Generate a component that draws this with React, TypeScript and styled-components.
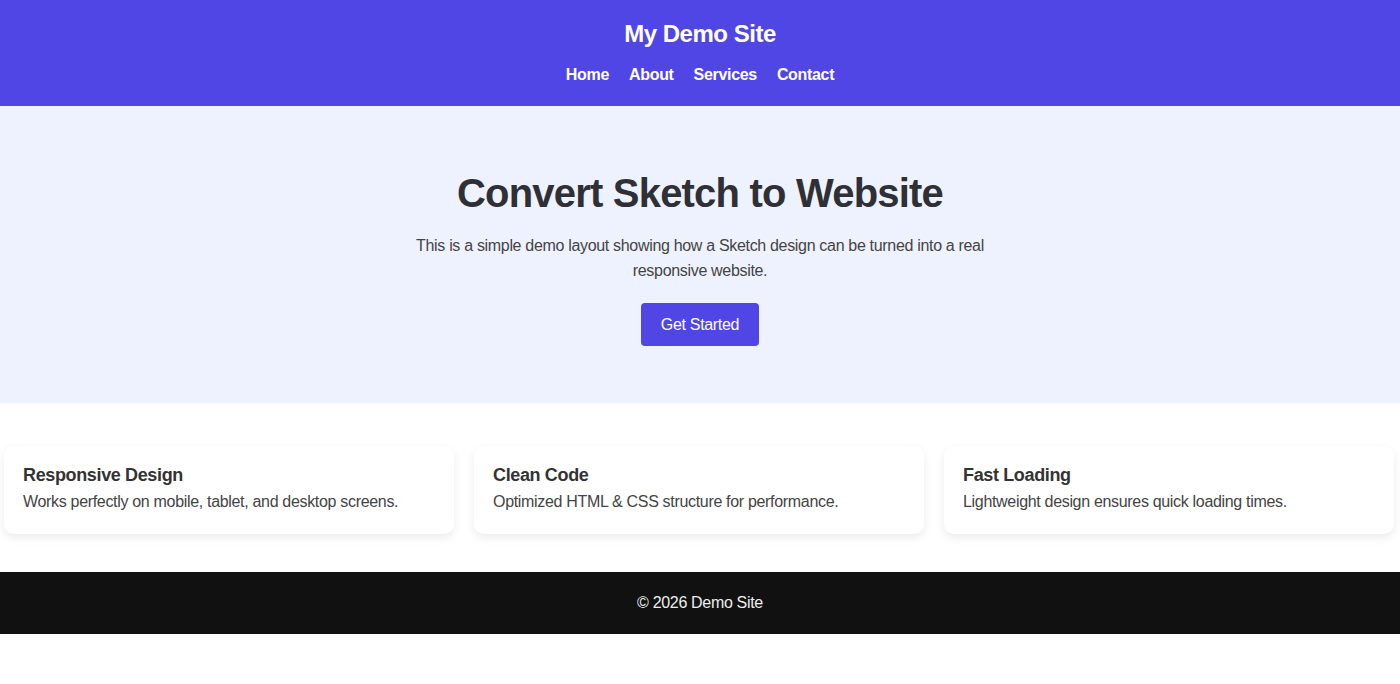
import * as React from 'react';
import styled, { createGlobalStyle } from 'styled-components';

const GlobalStyle = createGlobalStyle`
body {
    margin: 0;
    font-family: "Liberation Sans", Arial, sans-serif;
    background: #fff;
    color: #333;
}

* {
    letter-spacing: -0.02em;
}
`

const features = [
    { title: 'Responsive Design', text: 'Works perfectly on mobile, tablet, and desktop screens.' },
    { title: 'Clean Code', text: 'Optimized HTML & CSS structure for performance.' },
    { title: 'Fast Loading', text: 'Lightweight design ensures quick loading times.' },
];

const App = () => {
    return <>
        <GlobalStyle />
        <StyledHeader>
            <StyledLogo>My Demo Site</StyledLogo>
            <StyledNav>
                <StyledNavLink href="#">Home</StyledNavLink>
                <StyledNavLink href="#">About</StyledNavLink>
                <StyledNavLink href="#">Services</StyledNavLink>
                <StyledNavLink href="#">Contact</StyledNavLink>
            </StyledNav>
        </StyledHeader>

        <StyledHero>
            <StyledHeroTitle>Convert Sketch to Website</StyledHeroTitle>
            <StyledHeroText>This is a simple demo layout showing how a Sketch design can be turned into a real responsive website.</StyledHeroText>
            <StyledButton>Get Started</StyledButton>
        </StyledHero>

        <StyledFeatures>
            {features.map(f => <StyledCard key={f.title}>
                <StyledCardTitle>{f.title}</StyledCardTitle>
                <StyledCardText>{f.text}</StyledCardText>
            </StyledCard>)}
        </StyledFeatures>

        <StyledFooter>© 2026 Demo Site</StyledFooter>
    </>
}

const StyledHeader = styled.header`
background: #4f46e5;
color: #fff;
text-align: center;
padding: 20px 20px 22px;
`

const StyledLogo = styled.h1`
margin: 0;
font-size: 24px;
line-height: 28px;
font-weight: bold;
`

const StyledNav = styled.nav`
display: flex;
justify-content: center;
gap: 20px;
margin-top: 18px;
`

const StyledNavLink = styled.a`
color: #fff;
text-decoration: none;
font-weight: bold;
font-size: 16px;
line-height: 18px;
`

const StyledHero = styled.section`
background: #eef2ff;
text-align: center;
padding: 64px 20px 57px;
`

const StyledHeroTitle = styled.h2`
margin: 0 0 17px;
font-size: 40px;
line-height: 46px;
color: #2f3035;
`

const StyledHeroText = styled.p`
margin: 0 auto 20px;
max-width: 600px;
font-size: 16px;
line-height: 25px;
color: #444;
`

const StyledButton = styled.button`
background: #4f46e5;
color: #fff;
border: none;
border-radius: 4px;
padding: 0 20px;
height: 43px;
font-family: inherit;
font-size: 16px;
cursor: pointer;
`

const StyledFeatures = styled.section`
display: grid;
grid-template-columns: repeat(3, 1fr);
gap: 20px;
padding: 43px 6px 38px 4px;
`

const StyledCard = styled.div`
background: #fff;
border-radius: 10px;
padding: 18px 19px 21px;
box-shadow: 0 4px 10px rgba(0, 0, 0, 0.08);
`

const StyledCardTitle = styled.h3`
margin: 0 0 5px;
font-size: 18px;
line-height: 22px;
color: #333;
`

const StyledCardText = styled.p`
margin: 0;
font-size: 16px;
line-height: 22px;
color: #444;
`

const StyledFooter = styled.footer`
background: #111;
color: #eee;
text-align: center;
font-size: 16px;
line-height: 22px;
padding: 20px;
`

export default App;
